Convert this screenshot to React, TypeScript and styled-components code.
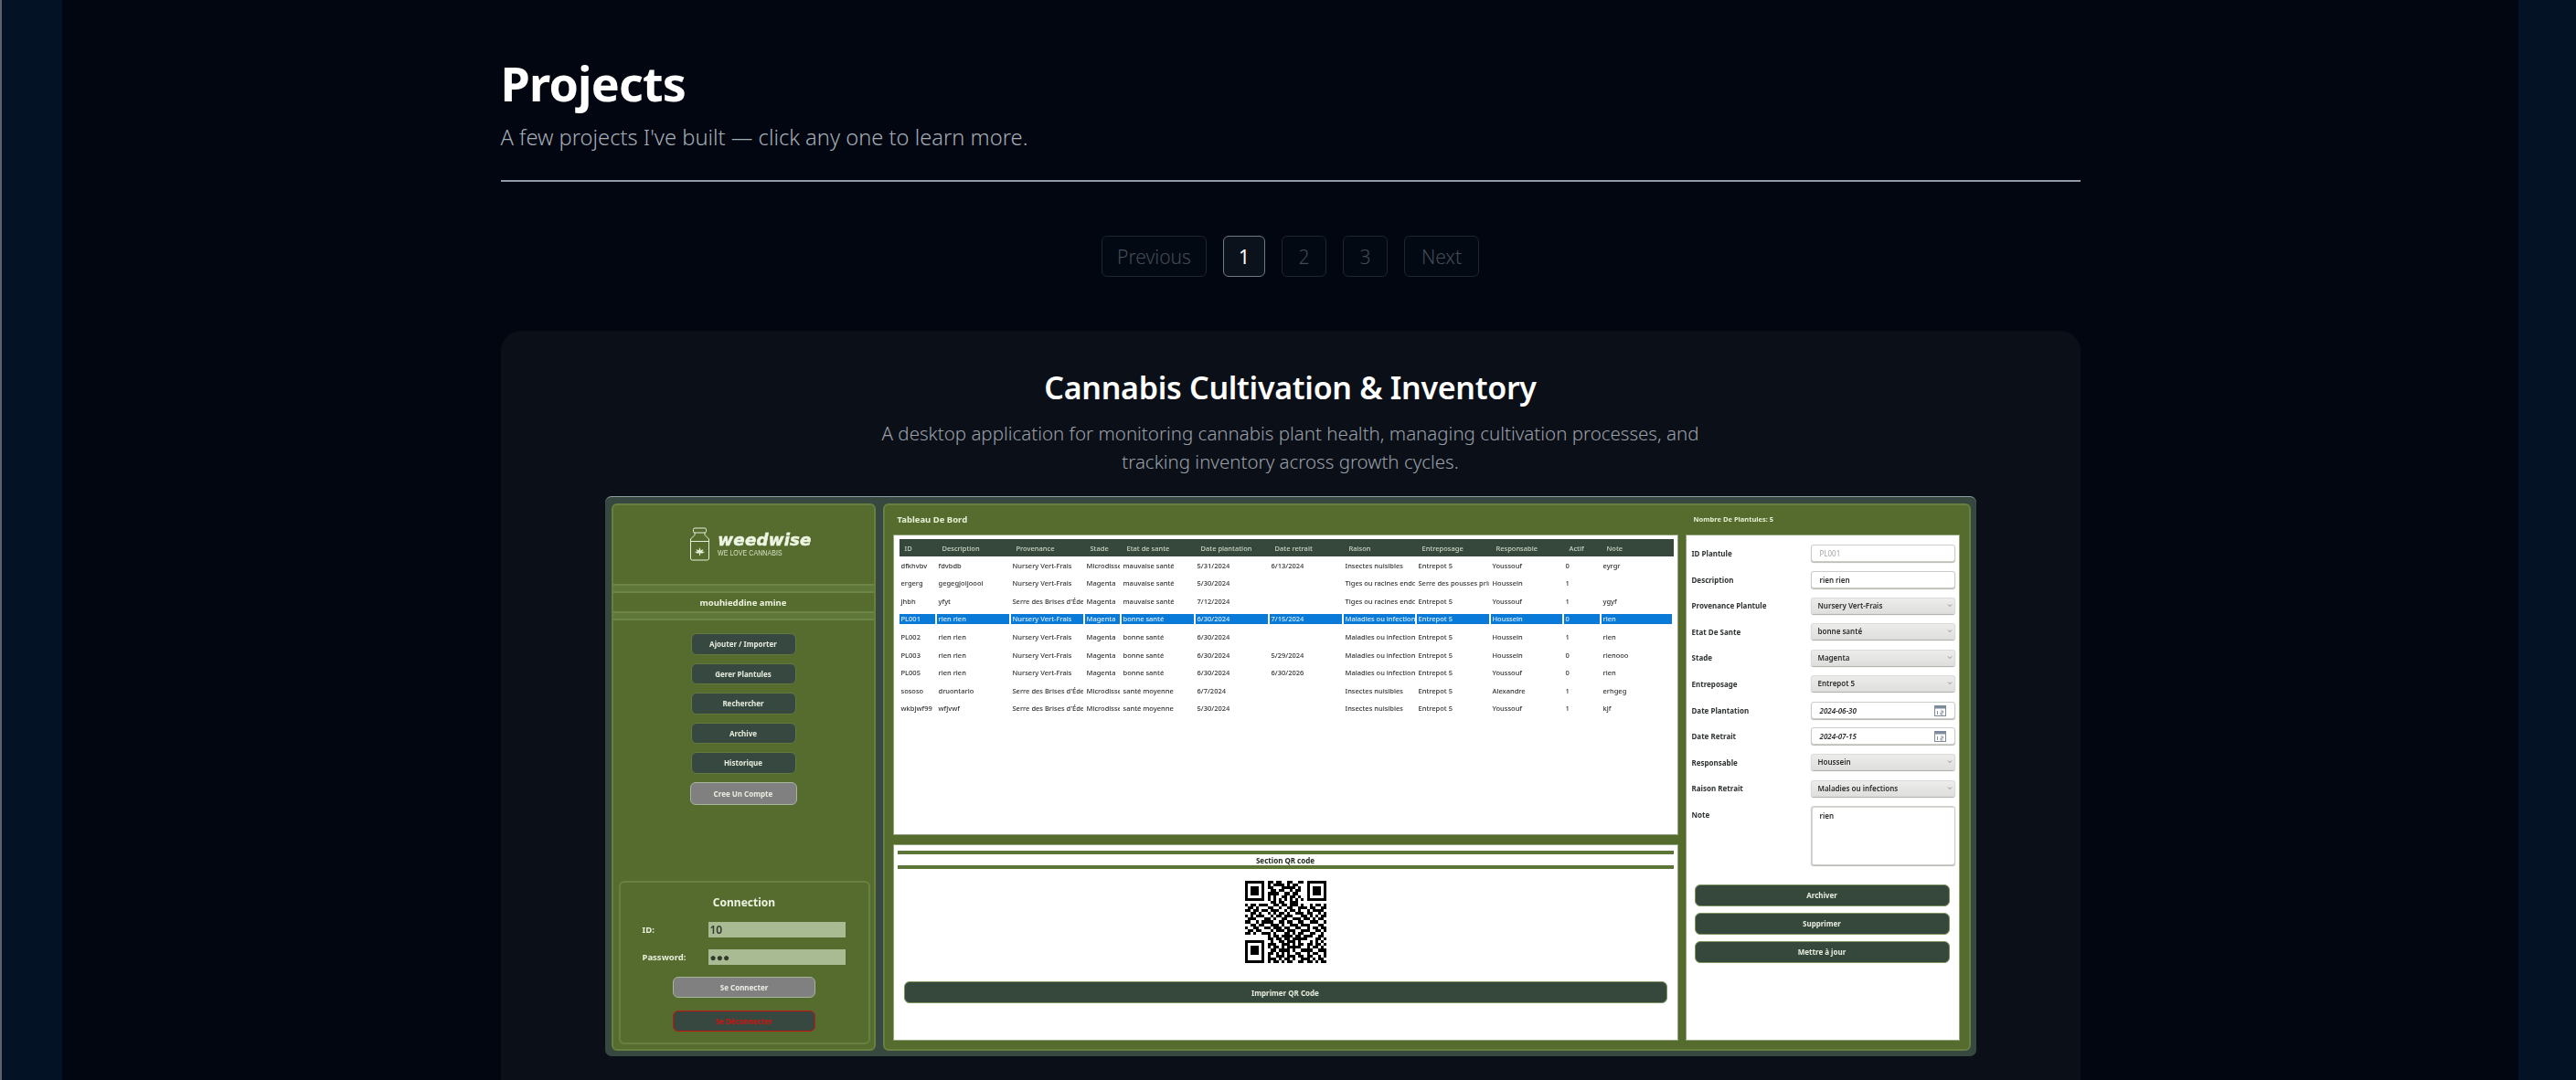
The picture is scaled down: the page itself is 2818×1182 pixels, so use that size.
import styled, { createGlobalStyle } from "styled-components";

const GlobalStyle = createGlobalStyle`
  html, body {
    margin: 0;
    padding: 0;
    height: 100%;
    overflow: hidden;
    background: #031224;
  }
  * {
    box-sizing: border-box;
  }
`;

const Page = styled.div`
  display: grid;
  grid-template-columns: 2px 66px 1fr 63px;
  height: 100vh;
  overflow: hidden;
  font-family: "Noto Sans", "Open Sans", sans-serif;
`;

const EdgeRule = styled.div`
  background: #5d6368;
`;

const SideBand = styled.div`
  background: #031224;
`;

const Main = styled.main`
  background: #010610;
  overflow: hidden;
`;

const Column = styled.div`
  width: 1728px;
  margin: 0 auto;
  padding-top: 58px;
`;

const Title = styled.h1`
  margin: 0;
  font-size: 52px;
  line-height: 66px;
  font-weight: 700;
  color: #ffffff;
  letter-spacing: -0.8px;
`;

const Subtitle = styled.p`
  margin: 0;
  padding-top: 8px;
  font-size: 23.7px;
  line-height: 36px;
  color: #a4acb5;
  font-weight: 300;
`;

const Divider = styled.hr`
  margin: 29px 0 0;
  border: 0;
  height: 2px;
  background: #8d9aa8;
`;

const Pagination = styled.nav`
  display: flex;
  justify-content: center;
  gap: 18px;
  margin-top: 59px;
`;

const PageButton = styled.div<{ $width: number; $active?: boolean }>`
  width: ${(p) => p.$width}px;
  height: 45px;
  display: flex;
  align-items: center;
  justify-content: center;
  border-radius: 6px;
  border: 1.5px solid ${(p) => (p.$active ? "#6f7a88" : "#1d2530")};
  background: ${(p) => (p.$active ? "#0c121c" : "#030913")};
  color: ${(p) => (p.$active ? "#ffffff" : "#444b56")};
  font-size: 21px;
  font-weight: ${(p) => (p.$active ? 400 : 300)};
`;

const Card = styled.section`
  margin-top: 59px;
  padding: 39px 114px 60px;
  background: #0b0f18;
  border-radius: 22px;
  text-align: center;
`;

const CardTitle = styled.h2`
  margin: 0;
  font-size: 34px;
  line-height: 46px;
  font-weight: 600;
  color: #ffffff;
  letter-spacing: -0.3px;
`;

const CardText = styled.p`
  margin: 12px auto 0;
  width: 905px;
  font-size: 20.5px;
  line-height: 31px;
  color: #9aa0a8;
  font-weight: 300;
`;

/* screenshot of the desktop app, kept a little soft like the video frame it came from */
const AppFrame = styled.div`
  display: grid;
  grid-template-columns: 289px 1190px;
  column-gap: 8px;
  width: 1500px;
  height: 613px;
  margin: 22px 0 0;
  padding: 7px 6px 6px 7px;
  background: #36483f;
  border-top: 1px solid #8ea0a0;
  border-radius: 7px;
  text-align: left;
  font-family: "Noto Sans", sans-serif;
  filter: blur(0.45px);
`;

const SidePanel = styled.aside`
  display: flex;
  flex-direction: column;
  background: #566c2e;
  border: 2px solid #67803f;
  border-radius: 6px;
`;

const LogoArea = styled.div`
  height: 86px;
  display: flex;
  align-items: center;
  justify-content: center;
  gap: 8px;
  padding: 0 0 2px 16px;
`;

const LogoText = styled.div`
  display: flex;
  flex-direction: column;
  color: #eef5e2;
`;

const LogoName = styled.div`
  font-family: "DejaVu Sans", sans-serif;
  font-size: 18.2px;
  line-height: 20px;
  font-weight: 700;
  font-style: italic;
  letter-spacing: 0.2px;
  -webkit-text-stroke: 0.5px #eef5e2;
`;

const LogoTag = styled.div`
  font-family: "Liberation Sans", sans-serif;
  font-size: 8.5px;
  line-height: 9px;
  color: #d8e2c6;
  letter-spacing: 0.1px;
  transform: scaleX(0.82);
  transform-origin: left center;
  white-space: nowrap;
`;

const DoubleBand = styled.div`
  height: 10px;
  background: #5f7739;
  border-top: 2px solid #6c8447;
  border-bottom: 2px solid #6c8447;
`;

const UserName = styled.div`
  height: 20px;
  display: flex;
  align-items: center;
  justify-content: center;
  font-size: 9.5px;
  font-weight: 700;
  color: #eef3e2;
`;

const NavList = styled.div`
  display: flex;
  flex-direction: column;
  align-items: center;
  gap: 9px;
  padding-top: 14px;
  flex: 1;
`;

const NavButton = styled.div<{ $muted?: boolean }>`
  width: ${(p) => (p.$muted ? 117 : 115)}px;
  height: ${(p) => (p.$muted ? 25 : 23.5)}px;
  display: flex;
  align-items: center;
  justify-content: center;
  border-radius: 6px;
  background: ${(p) => (p.$muted ? "#7f807f" : "#36483f")};
  border: 1.5px solid ${(p) => (p.$muted ? "#a7b59b" : "#62793f")};
  color: #e8ecdf;
  font-size: 8px;
  font-weight: 700;
`;

const LoginBox = styled.div`
  height: 179px;
  margin: 0 4px 5px 6px;
  padding: 14px 24px 0 24px;
  border: 2px solid #67803f;
  border-radius: 6px;
  display: flex;
  flex-direction: column;
`;

const LoginTitle = styled.div`
  text-align: center;
  font-size: 12px;
  line-height: 16px;
  font-weight: 700;
  color: #eef3e2;
`;

const LoginRow = styled.div`
  display: grid;
  grid-template-columns: 72px 150px;
  align-items: center;
  height: 17px;
  margin-top: 13px;
`;

const LoginLabel = styled.div`
  font-size: 9.5px;
  font-weight: 700;
  color: #e8eddc;
`;

const LoginField = styled.div`
  height: 17px;
  padding-left: 2px;
  background: #a9bb92;
  color: #33392c;
  font-size: 12px;
  line-height: 17px;
  font-weight: 600;
`;

const LoginButton = styled.div<{ $danger?: boolean }>`
  align-self: center;
  width: 156px;
  height: 23px;
  margin-top: ${(p) => (p.$danger ? 14 : 13)}px;
  display: flex;
  align-items: center;
  justify-content: center;
  border-radius: 6px;
  background: ${(p) => (p.$danger ? "#36483f" : "#808080")};
  border: 1.5px solid ${(p) => (p.$danger ? "#c41410" : "#a7b59b")};
  color: ${(p) => (p.$danger ? "#d01510" : "#eceee6")};
  font-size: 8px;
  font-weight: 700;
`;

const MainPanel = styled.div`
  display: grid;
  grid-template-columns: 857px 298px;
  column-gap: 10px;
  padding: 0 11px 0 10px;
  background: #566c2e;
  border: 2px solid #67803f;
  border-radius: 6px;
`;

const PanelColumn = styled.div`
  display: flex;
  flex-direction: column;
`;

const PanelHeading = styled.div<{ $small?: boolean }>`
  height: 33px;
  display: flex;
  align-items: center;
  padding-left: ${(p) => (p.$small ? 8 : 4)}px;
  padding-bottom: 3px;
  font-size: ${(p) => (p.$small ? 7.5 : 9.5)}px;
  font-weight: 700;
  color: #e6f0d4;
`;

const TableBox = styled.div`
  height: 327px;
  padding: 4px 4px 0 6px;
  background: #ffffff;
  box-shadow: 0 0 0 1px #8ea27a;
`;

const columns = "41px 81px 81px 40px 81px 81px 81px 80px 81px 80px 41px 79px";

const TableHead = styled.div`
  display: grid;
  grid-template-columns: ${columns};
  height: 19px;
  align-items: center;
  background: #36483c;
  color: #cdd6c5;
  font-size: 7.5px;
  font-weight: 500;
`;

const HeadCell = styled.div`
  padding-left: 6px;
  white-space: nowrap;
  overflow: hidden;
`;

const TableRow = styled.div`
  display: grid;
  grid-template-columns: ${columns};
  height: 19.6px;
  align-items: center;
`;

const Cell = styled.div<{ $selected?: boolean }>`
  height: 10.5px;
  margin-right: 2px;
  padding-left: 2px;
  font-size: 7.5px;
  font-weight: 500;
  line-height: 10.5px;
  white-space: nowrap;
  overflow: hidden;
  color: ${(p) => (p.$selected ? "#d9ecfb" : "#2f332e")};
  background: ${(p) => (p.$selected ? "#0a7ad8" : "transparent")};
`;

const QrBox = styled.div`
  height: 213px;
  margin-top: 12px;
  padding: 6px 4px 0;
  background: #ffffff;
  box-shadow: 0 0 0 1px #8ea27a;
  display: flex;
  flex-direction: column;
  align-items: center;
`;

const QrHeading = styled.div`
  width: 100%;
  height: 20px;
  display: flex;
  align-items: center;
  justify-content: center;
  border-top: 4px solid #5d7536;
  border-bottom: 4px solid #5d7536;
  font-size: 8px;
  font-weight: 700;
  color: #222a20;
`;

const QrCode = styled.svg`
  width: 89px;
  height: 90px;
  margin-top: 13px;
`;

const DarkButton = styled.div<{ $width: number }>`
  width: ${(p) => p.$width}px;
  height: 24px;
  display: flex;
  align-items: center;
  justify-content: center;
  flex: none;
  border-radius: 6px;
  background: #36483c;
  border: 1px solid #7f9560;
  color: #e8ecdf;
  font-size: 8px;
  font-weight: 700;
`;

const PrintButton = styled(DarkButton)`
  margin-top: 20px;
`;

const FormBox = styled.div`
  height: 552px;
  padding: 10px 4px 0 6px;
  background: #ffffff;
  box-shadow: 0 0 0 1px #8ea27a;
  display: flex;
  flex-direction: column;
`;

const FormRows = styled.div`
  display: grid;
  grid-auto-rows: 19px;
  row-gap: 9.6px;
`;

const FormRow = styled.div`
  display: grid;
  grid-template-columns: 130px 158px;
  align-items: center;
`;

const FormLabel = styled.div`
  font-size: 8px;
  font-weight: 700;
  color: #2d3230;
  white-space: nowrap;
`;

const TextField = styled.div<{ $placeholder?: boolean; $italic?: boolean }>`
  position: relative;
  height: 19px;
  padding-left: 9px;
  line-height: 18px;
  border-radius: 3px;
  background: #ffffff;
  border: 1px solid #c9cdc5;
  box-shadow: 0 1px 1px #b7b9b3;
  font-size: 8px;
  font-weight: ${(p) => (p.$placeholder ? 400 : 600)};
  font-style: ${(p) => (p.$italic ? "italic" : "normal")};
  color: ${(p) => (p.$placeholder ? "#a5a8a5" : "#2a2d2a")};
`;

const SelectField = styled.div`
  position: relative;
  height: 18px;
  padding-left: 8px;
  line-height: 18px;
  border-radius: 3px;
  background: linear-gradient(#ededeb, #dededc);
  box-shadow: 0 1px 1px #a9aba6, inset 0 0 0 1px #dcdcda;
  font-size: 8px;
  font-weight: 600;
  color: #2a2d2a;
`;

const Caret = styled.svg`
  position: absolute;
  right: 3px;
  top: 6px;
  width: 6px;
  height: 5px;
`;

const CalendarIcon = styled.svg`
  position: absolute;
  right: 9px;
  top: 3px;
  width: 13px;
  height: 12px;
`;

const NoteField = styled(TextField)`
  height: 65px;
  align-self: start;
  line-height: 20px;
  box-shadow: 0 1px 1px #b7b9b3, inset 1px 1px 1px #d5d5d2;
`;

const NoteLabel = styled(FormLabel)`
  align-self: start;
  margin-top: 4px;
`;

const FormActions = styled.div`
  display: flex;
  flex-direction: column;
  align-items: flex-start;
  gap: 7px;
  margin-top: 67px;
  padding-left: 3px;
`;

const qrRows = [
  "11111110110110011001101111111",
  "10000010101111010110001000001",
  "10111010110001111101001011101",
  "10111010011011001011001011101",
  "10111010111100110110001011101",
  "10000010101001101101001000001",
  "11111110101010101010101111111",
  "00000000011011001110000000000",
  "10110111001101101110100101101",
  "01101000110010011001110110011",
  "11011011011100101101001011110",
  "00110100101011010011101100101",
  "10101110010110111000110101011",
  "01110001101001100111011010110",
  "11001011110011011001100111001",
  "00110110011101001110111000110",
  "10011001101110110011001011011",
  "01101100010111011100111001101",
  "11010011101000110101100110010",
  "00000000101101111011011100110",
  "00000000110110110111110001101",
  "11111110010011011101000101010",
  "10000010111001110101101101101",
  "10111010101101011111001011010",
  "10111010011011110100111100111",
  "10111010110101010011001011001",
  "10000010100111011101101100101",
  "10000010111010110100111010110",
  "11111110101101011001101101011",
];

const qrPath = qrRows
  .flatMap((row, y) =>
    row.split("").map((bit, x) => (bit === "1" ? `M${x} ${y}h1v1h-1z` : ""))
  )
  .join("");

const navItems = [
  "Ajouter / Importer",
  "Gerer Plantules",
  "Rechercher",
  "Archive",
  "Historique",
];

const headers = [
  "ID",
  "Description",
  "Provenance",
  "Stade",
  "Etat de sante",
  "Date plantation",
  "Date retrait",
  "Raison",
  "Entreposage",
  "Responsable",
  "Actif",
  "Note",
];

const rows = [
  ["dfkhvbv", "fdvbdb", "Nursery Vert-Frais", "Microdissection", "mauvaise santé", "5/31/2024", "6/13/2024", "Insectes nuisibles", "Entrepot 5", "Youssouf", "0", "eyrgr"],
  ["ergerg", "gegegjoijoooi", "Nursery Vert-Frais", "Magenta", "mauvaise santé", "5/30/2024", "", "Tiges ou racines endommagées", "Serre des pousses principale", "Houssein", "1", ""],
  ["jhbh", "yfyt", "Serre des Brises d'Éden", "Magenta", "mauvaise santé", "7/12/2024", "", "Tiges ou racines endommagées", "Entrepot 5", "Youssouf", "1", "ygyf"],
  ["PL001", "rien rien", "Nursery Vert-Frais", "Magenta", "bonne santé", "6/30/2024", "7/15/2024", "Maladies ou infections", "Entrepot 5", "Houssein", "0", "rien"],
  ["PL002", "rien rien", "Nursery Vert-Frais", "Magenta", "bonne santé", "6/30/2024", "", "Maladies ou infections", "Entrepot 5", "Houssein", "1", "rien"],
  ["PL003", "rien rien", "Nursery Vert-Frais", "Magenta", "bonne santé", "6/30/2024", "5/29/2024", "Maladies ou infections", "Entrepot 5", "Houssein", "0", "rienooo"],
  ["PL005", "rien rien", "Nursery Vert-Frais", "Magenta", "bonne santé", "6/30/2024", "6/30/2026", "Maladies ou infections", "Entrepot 5", "Youssouf", "0", "rien"],
  ["sososo", "druontario", "Serre des Brises d'Éden", "Microdissection", "santé moyenne", "6/7/2024", "", "Insectes nuisibles", "Entrepot 5", "Alexandre", "1", "erhgeg"],
  ["wkbjwf99", "wfjvwf", "Serre des Brises d'Éden", "Microdissection", "santé moyenne", "5/30/2024", "", "Insectes nuisibles", "Entrepot 5", "Youssouf", "1", "kjf"],
];

const BottleLogo = () => (
  <svg width="23" height="37" viewBox="0 0 23 37" fill="none" stroke="#e6efd8" strokeWidth="1">
    <rect x="4.5" y="1" width="14" height="5" rx="1.5" />
    <path d="M6 6v2.5L1.5 13v21a2 2 0 0 0 2 2h16a2 2 0 0 0 2-2V13L17 8.5V6" />
    <path d="M1.5 15.5h20" />
    <path
      d="M11.5 22l1.2 3.4 2.8-1.4-1.2 3 3-.2-2.8 1.8h-6l-2.8-1.8 3 .2-1.2-3 2.8 1.4z"
      fill="#e6efd8"
      stroke="none"
    />
    <path d="M11.5 28v3" />
  </svg>
);

const Calendar = () => (
  <CalendarIcon viewBox="0 0 13 12" fill="none">
    <rect x="0.5" y="0.5" width="12" height="11" fill="#ffffff" stroke="#7e8a95" />
    <rect x="0.5" y="0.5" width="12" height="3" fill="#7d8b9c" />
    <path d="M3.5 6v4M7 6H9.5V8H7V10H9.5" stroke="#6d7a88" strokeWidth="0.8" />
  </CalendarIcon>
);

const Select = ({ value }: { value: string }) => (
  <SelectField>
    {value}
    <Caret viewBox="0 0 6 5" fill="none" stroke="#777" strokeWidth="0.8">
      <path d="M1 1.5l2 2 2-2" />
    </Caret>
  </SelectField>
);

const App = () => {
  return (
    <>
      <GlobalStyle />
      <Page>
        <EdgeRule />
        <SideBand />
        <Main>
          <Column>
            <Title>Projects</Title>
            <Subtitle>A few projects I've built — click any one to learn more.</Subtitle>
            <Divider />

            <Pagination>
              <PageButton $width={115}>Previous</PageButton>
              <PageButton $width={46} $active>
                1
              </PageButton>
              <PageButton $width={49}>2</PageButton>
              <PageButton $width={49}>3</PageButton>
              <PageButton $width={82}>Next</PageButton>
            </Pagination>

            <Card>
              <CardTitle>Cannabis Cultivation &amp; Inventory</CardTitle>
              <CardText>
                A desktop application for monitoring cannabis plant health, managing cultivation
                processes, and tracking inventory across growth cycles.
              </CardText>

              <AppFrame>
                <SidePanel>
                  <LogoArea>
                    <BottleLogo />
                    <LogoText>
                      <LogoName>weedwise</LogoName>
                      <LogoTag>WE LOVE CANNABIS</LogoTag>
                    </LogoText>
                  </LogoArea>
                  <DoubleBand />
                  <UserName>mouhieddine amine</UserName>
                  <DoubleBand />
                  <NavList>
                    {navItems.map((item) => (
                      <NavButton key={item}>{item}</NavButton>
                    ))}
                    <NavButton $muted>Cree Un Compte</NavButton>
                  </NavList>
                  <LoginBox>
                    <LoginTitle>Connection</LoginTitle>
                    <LoginRow>
                      <LoginLabel>ID:</LoginLabel>
                      <LoginField>10</LoginField>
                    </LoginRow>
                    <LoginRow>
                      <LoginLabel>Password:</LoginLabel>
                      <LoginField>●●●</LoginField>
                    </LoginRow>
                    <LoginButton>Se Connecter</LoginButton>
                    <LoginButton $danger>Se Déconnecter</LoginButton>
                  </LoginBox>
                </SidePanel>

                <MainPanel>
                  <PanelColumn>
                    <PanelHeading>Tableau De Bord</PanelHeading>
                    <TableBox>
                      <TableHead>
                        {headers.map((h) => (
                          <HeadCell key={h}>{h}</HeadCell>
                        ))}
                      </TableHead>
                      {rows.map((row) => (
                        <TableRow key={row[0]}>
                          {row.map((value, i) => (
                            <Cell key={i} $selected={row[0] === "PL001"}>
                              {value}
                            </Cell>
                          ))}
                        </TableRow>
                      ))}
                    </TableBox>
                    <QrBox>
                      <QrHeading>Section QR code</QrHeading>
                      <QrCode viewBox="0 0 29 29" preserveAspectRatio="none" shapeRendering="crispEdges">
                        <path d={qrPath} fill="#000" />
                      </QrCode>
                      <PrintButton $width={835}>Imprimer QR Code</PrintButton>
                    </QrBox>
                  </PanelColumn>

                  <PanelColumn>
                    <PanelHeading $small>Nombre De Plantules: 5</PanelHeading>
                    <FormBox>
                      <FormRows>
                        <FormRow>
                          <FormLabel>ID Plantule</FormLabel>
                          <TextField $placeholder>PL001</TextField>
                        </FormRow>
                        <FormRow>
                          <FormLabel>Description</FormLabel>
                          <TextField>rien rien</TextField>
                        </FormRow>
                        <FormRow>
                          <FormLabel>Provenance Plantule</FormLabel>
                          <Select value="Nursery Vert-Frais" />
                        </FormRow>
                        <FormRow>
                          <FormLabel>Etat De Sante</FormLabel>
                          <Select value="bonne santé" />
                        </FormRow>
                        <FormRow>
                          <FormLabel>Stade</FormLabel>
                          <Select value="Magenta" />
                        </FormRow>
                        <FormRow>
                          <FormLabel>Entreposage</FormLabel>
                          <Select value="Entrepot 5" />
                        </FormRow>
                        <FormRow>
                          <FormLabel>Date Plantation</FormLabel>
                          <TextField $italic>
                            2024-06-30
                            <Calendar />
                          </TextField>
                        </FormRow>
                        <FormRow>
                          <FormLabel>Date Retrait</FormLabel>
                          <TextField $italic>
                            2024-07-15
                            <Calendar />
                          </TextField>
                        </FormRow>
                        <FormRow>
                          <FormLabel>Responsable</FormLabel>
                          <Select value="Houssein" />
                        </FormRow>
                        <FormRow>
                          <FormLabel>Raison Retrait</FormLabel>
                          <Select value="Maladies ou infections" />
                        </FormRow>
                        <FormRow>
                          <NoteLabel>Note</NoteLabel>
                          <NoteField>rien</NoteField>
                        </FormRow>
                      </FormRows>
                      <FormActions>
                        <DarkButton $width={279}>Archiver</DarkButton>
                        <DarkButton $width={279}>Supprimer</DarkButton>
                        <DarkButton $width={279}>Mettre à jour</DarkButton>
                      </FormActions>
                    </FormBox>
                  </PanelColumn>
                </MainPanel>
              </AppFrame>
            </Card>
          </Column>
        </Main>
        <SideBand />
      </Page>
    </>
  );
};

export default App;
